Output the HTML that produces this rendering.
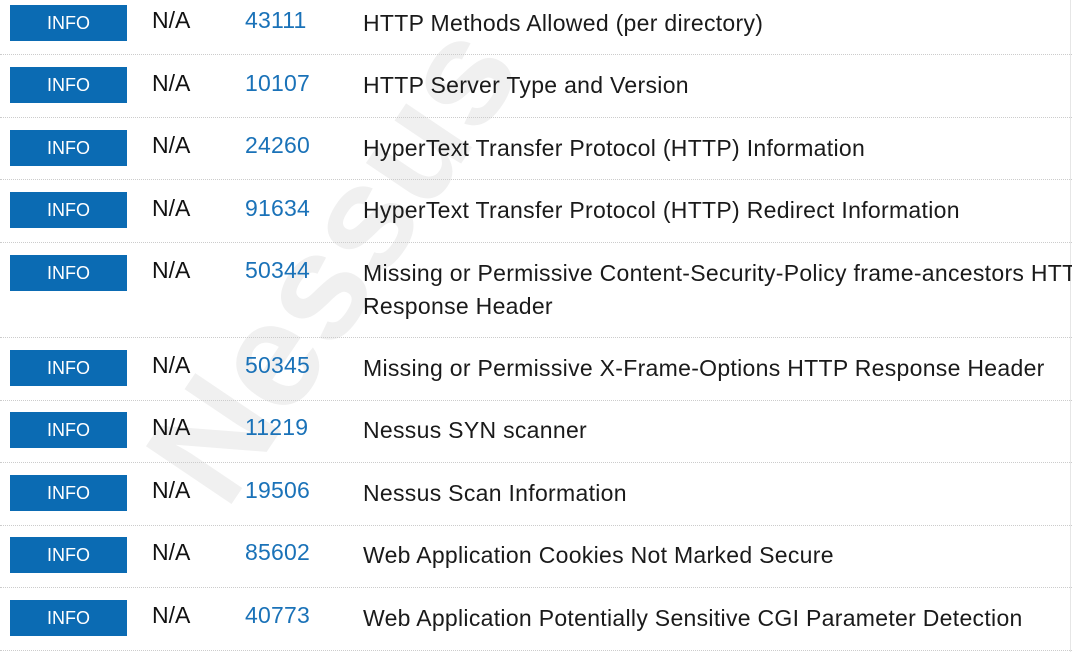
<!DOCTYPE html>
<html><head><meta charset="utf-8"><style>
body{margin:0;width:1072px;height:652px;overflow:hidden;background:#fff;font-family:"Liberation Sans",sans-serif;position:relative}
.wm{position:absolute;left:332px;top:262px;transform:translate(-50%,-50%) rotate(-56deg);font-size:150px;font-weight:bold;color:#f0f0f0;white-space:nowrap;line-height:1}
.b{position:absolute;left:10px;width:117px;height:36px;background:#0b6bb3;color:#fff;font-size:18px;line-height:36px;text-align:center}
.na,.id,.t{position:absolute;font-size:23px;line-height:33px}
.na{left:152px;color:#111}
.id{left:245px;color:#1a72b8;letter-spacing:0.2px}
.t{left:363px;color:#1a1a1a;white-space:nowrap;letter-spacing:0.3px}
.d{position:absolute;left:0;width:1072px;border-top:1px dotted #ccc}
.vr{position:absolute;left:1070px;top:0;width:1px;height:652px;background:#e6e6e6}
</style></head><body>
<div class="wm">Nessus</div>
<div class="vr"></div>

<div class="b" style="top:5px">INFO</div><div class="na" style="top:4px">N/A</div><div class="id" style="top:4px">43111</div><div class="t" style="top:7px">HTTP Methods Allowed (per directory)</div><div class="d" style="top:54px"></div>

<div class="b" style="top:67px">INFO</div><div class="na" style="top:67px">N/A</div><div class="id" style="top:67px">10107</div><div class="t" style="top:69px">HTTP Server Type and Version</div><div class="d" style="top:117px"></div>

<div class="b" style="top:130px">INFO</div><div class="na" style="top:129px">N/A</div><div class="id" style="top:129px">24260</div><div class="t" style="top:132px">HyperText Transfer Protocol (HTTP) Information</div><div class="d" style="top:179px"></div>

<div class="b" style="top:192px">INFO</div><div class="na" style="top:192px">N/A</div><div class="id" style="top:192px">91634</div><div class="t" style="top:194px">HyperText Transfer Protocol (HTTP) Redirect Information</div><div class="d" style="top:242px"></div>

<div class="b" style="top:255px">INFO</div><div class="na" style="top:254px">N/A</div><div class="id" style="top:254px">50344</div><div class="t" style="top:257px">Missing or Permissive Content-Security-Policy frame-ancestors HTTP<br>Response Header</div><div class="d" style="top:337px"></div>

<div class="b" style="top:350px">INFO</div><div class="na" style="top:349px">N/A</div><div class="id" style="top:349px">50345</div><div class="t" style="top:352px">Missing or Permissive X-Frame-Options HTTP Response Header</div><div class="d" style="top:400px"></div>

<div class="b" style="top:412px">INFO</div><div class="na" style="top:411px">N/A</div><div class="id" style="top:411px">11219</div><div class="t" style="top:414px">Nessus SYN scanner</div><div class="d" style="top:462px"></div>

<div class="b" style="top:475px">INFO</div><div class="na" style="top:474px">N/A</div><div class="id" style="top:474px">19506</div><div class="t" style="top:477px">Nessus Scan Information</div><div class="d" style="top:525px"></div>

<div class="b" style="top:537px">INFO</div><div class="na" style="top:536px">N/A</div><div class="id" style="top:536px">85602</div><div class="t" style="top:539px">Web Application Cookies Not Marked Secure</div><div class="d" style="top:587px"></div>

<div class="b" style="top:600px">INFO</div><div class="na" style="top:599px">N/A</div><div class="id" style="top:599px">40773</div><div class="t" style="top:602px">Web Application Potentially Sensitive CGI Parameter Detection</div><div class="d" style="top:650px"></div>
</body></html>
